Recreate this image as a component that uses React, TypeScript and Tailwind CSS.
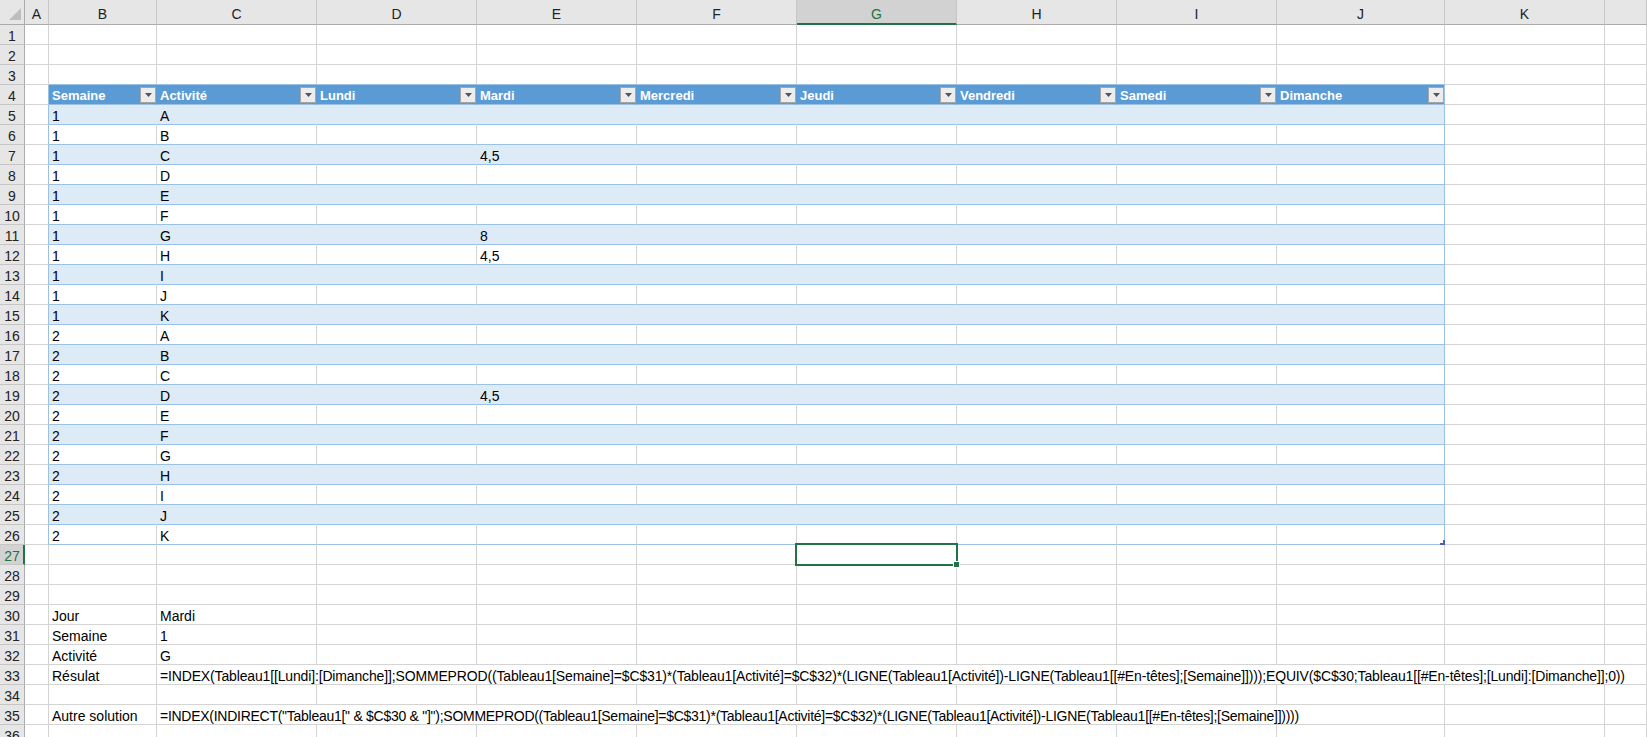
import React from "react";

const LETTERS = ["A", "B", "C", "D", "E", "F", "G", "H", "I", "J", "K", ""];

const FORMULA1 =
  "=INDEX(Tableau1[[Lundi]:[Dimanche]];SOMMEPROD((Tableau1[Semaine]=$C$31)*(Tableau1[Activité]=$C$32)*(LIGNE(Tableau1[Activité])-LIGNE(Tableau1[[#En-têtes];[Semaine]])));EQUIV($C$30;Tableau1[[#En-têtes];[Lundi]:[Dimanche]];0))";
const FORMULA2 =
  '=INDEX(INDIRECT("Tableau1[" & $C$30 & "]");SOMMEPROD((Tableau1[Semaine]=$C$31)*(Tableau1[Activité]=$C$32)*(LIGNE(Tableau1[Activité])-LIGNE(Tableau1[[#En-têtes];[Semaine]]))))';

const HEADERS = ["Semaine", "Activité", "Lundi", "Mardi", "Mercredi", "Jeudi", "Vendredi", "Samedi", "Dimanche"];
const ACTS = ["A", "B", "C", "D", "E", "F", "G", "H", "I", "J", "K"];
const MARDI: Record<number, string> = { 7: "4,5", 11: "8", 12: "4,5", 19: "4,5" };

function cellText(r: number, c: number): string {
  if (r >= 5 && r <= 26) {
    const i = r - 5;
    if (c === 1) return i < 11 ? "1" : "2";
    if (c === 2) return ACTS[i % 11];
    if (c === 4) return MARDI[r] ?? "";
  }
  if (r === 30 && c === 1) return "Jour";
  if (r === 30 && c === 2) return "Mardi";
  if (r === 31 && c === 1) return "Semaine";
  if (r === 31 && c === 2) return "1";
  if (r === 32 && c === 1) return "Activité";
  if (r === 32 && c === 2) return "G";
  if (r === 33 && c === 1) return "Résulat";
  if (r === 35 && c === 1) return "Autre solution";
  return "";
}

function FilterButton() {
  return (
    <div className="mt-[2px] flex h-[16px] w-[16px] shrink-0 items-center justify-center self-start border border-[#a6a6a6] bg-[#ececec]">
      <svg width="7" height="4" viewBox="0 0 7 4">
        <path d="M0 0 H7 L3.5 4 Z" fill="#555555" />
      </svg>
    </div>
  );
}

function Cell({ r, c }: { r: number; c: number }) {
  const text = cellText(r, c);
  const inTable = r >= 4 && r <= 26 && c >= 1 && c <= 9;
  const lastCol = c === 9;
  let cls = "relative flex items-end overflow-visible whitespace-nowrap pl-[3px] border-r border-b ";

  if (inTable && r === 4) {
    cls += lastCol
      ? "bg-[#5b9bd5] border-r-[#9bc2e6] border-b-[#9bc2e6] pr-0 justify-between"
      : "bg-[#5b9bd5] border-r-[#5b9bd5] border-b-[#9bc2e6] pr-0 justify-between";
    return (
      <div className={cls}>
        <span className="text-[13px] leading-[16px] font-bold text-white">{HEADERS[c - 1]}</span>
        <FilterButton />
      </div>
    );
  }

  if (inTable) {
    const banded = r % 2 === 1;
    if (banded) {
      cls += lastCol
        ? "bg-[#ddebf7] border-r-[#9bc2e6] border-b-[#9bc2e6]"
        : "bg-[#ddebf7] border-r-[#ddebf7] border-b-[#9bc2e6]";
    } else {
      cls += lastCol
        ? "bg-white border-r-[#9bc2e6] border-b-[#9bc2e6]"
        : "bg-white border-r-[#d4d4d4] border-b-[#9bc2e6]";
    }
  } else if (r === 3 && c >= 1 && c <= 9) {
    cls += "bg-white border-r-[#d4d4d4] border-b-[#9bc2e6]";
  } else if (c === 0 && r >= 4 && r <= 26) {
    cls += "bg-white border-r-[#9bc2e6] border-b-[#d4d4d4]";
  } else {
    cls += "bg-white border-[#d4d4d4]";
  }

  return (
    <div className={cls}>
      {text ? <span className="leading-[16px] text-black">{text}</span> : null}
      {r === 27 && c === 6 ? (
        <>
          <div className="pointer-events-none absolute -left-[2px] -top-[2px] z-10 h-[23px] w-[163px] border-2 border-[#217346]" />
          <div className="absolute left-[156px] top-[16px] z-20 h-[7px] w-[7px] border border-white bg-[#217346]" />
        </>
      ) : null}
      {r === 26 && c === 9 ? (
        <svg className="absolute -bottom-[1px] -right-[1px] z-10" width="5" height="5" viewBox="0 0 5 5">
          <path d="M3 0 H5 V5 H0 V3 H3 Z" fill="#4a5fb5" />
        </svg>
      ) : null}
    </div>
  );
}

function SpillCell({ text, span8 }: { text: string; span8: boolean }) {
  return (
    <div
      className={
        span8
          ? "col-span-8 flex items-end overflow-visible whitespace-nowrap border-r border-b border-[#d4d4d4] bg-white pl-[3px]"
          : "col-span-10 flex items-end overflow-visible whitespace-nowrap border-r border-b border-[#d4d4d4] bg-white pl-[3px]"
      }
    >
      <span className={span8 ? "leading-[16px] tracking-[-0.27px] text-black" : "leading-[16px] tracking-[-0.15px] text-black"}>
        {text}
      </span>
    </div>
  );
}

function RowHeader({ r }: { r: number }) {
  if (r === 27) {
    return (
      <div className="flex items-end justify-center border-b border-r-2 border-b-[#c6c6c6] border-r-[#217346] bg-[#d2d2d2] pl-[1px]">
        <span className="leading-[16px] text-[#217346]">{r}</span>
      </div>
    );
  }
  return (
    <div className="flex items-end justify-center border-b border-r border-b-[#c6c6c6] border-r-[#ababab] bg-[#e6e6e6]">
      <span className="leading-[16px] text-[#222222]">{r}</span>
    </div>
  );
}

export default function App() {
  const rows: React.ReactNode[] = [];
  for (let r = 1; r <= 36; r++) {
    rows.push(<RowHeader key={`h${r}`} r={r} />);
    if (r === 33) {
      rows.push(<Cell key={`c${r}-0`} r={r} c={0} />);
      rows.push(<Cell key={`c${r}-1`} r={r} c={1} />);
      rows.push(<SpillCell key={`s${r}`} text={FORMULA1} span8={false} />);
      continue;
    }
    if (r === 35) {
      rows.push(<Cell key={`c${r}-0`} r={r} c={0} />);
      rows.push(<Cell key={`c${r}-1`} r={r} c={1} />);
      rows.push(<SpillCell key={`s${r}`} text={FORMULA2} span8={true} />);
      rows.push(<Cell key={`c${r}-10`} r={r} c={10} />);
      rows.push(<Cell key={`c${r}-11`} r={r} c={11} />);
      continue;
    }
    for (let c = 0; c < 12; c++) {
      rows.push(<Cell key={`c${r}-${c}`} r={r} c={c} />);
    }
  }

  return (
    <div className="h-[737px] w-[1647px] overflow-hidden bg-white font-['Liberation_Sans',Arial,sans-serif] text-[14px]">
      <div className="grid grid-cols-[25px_24px_108px_160px_160px_160px_160px_160px_160px_160px_168px_160px_1fr] grid-rows-[25px] auto-rows-[20px]">
        <div className="relative border-b border-r border-[#ababab] bg-[#e6e6e6]">
          <svg className="absolute left-0 top-0" width="24" height="24" viewBox="0 0 24 24">
            <path d="M21 8 V20 H9 Z" fill="#bdbdbd" />
          </svg>
        </div>
        {LETTERS.map((l, i) =>
          i === 6 ? (
            <div key={`col${i}`} className="flex items-end justify-center border-b-2 border-r border-b-[#217346] border-r-[#c6c6c6] bg-[#d2d2d2] pb-[1px]">
              <span className="leading-[16px] text-[#217346]">{l}</span>
            </div>
          ) : (
            <div key={`col${i}`} className="flex items-end justify-center border-b border-r border-b-[#ababab] border-r-[#c6c6c6] bg-[#e6e6e6] pb-[2px]">
              <span className="leading-[16px] text-[#222222]">{l}</span>
            </div>
          )
        )}
        {rows}
      </div>
    </div>
  );
}
